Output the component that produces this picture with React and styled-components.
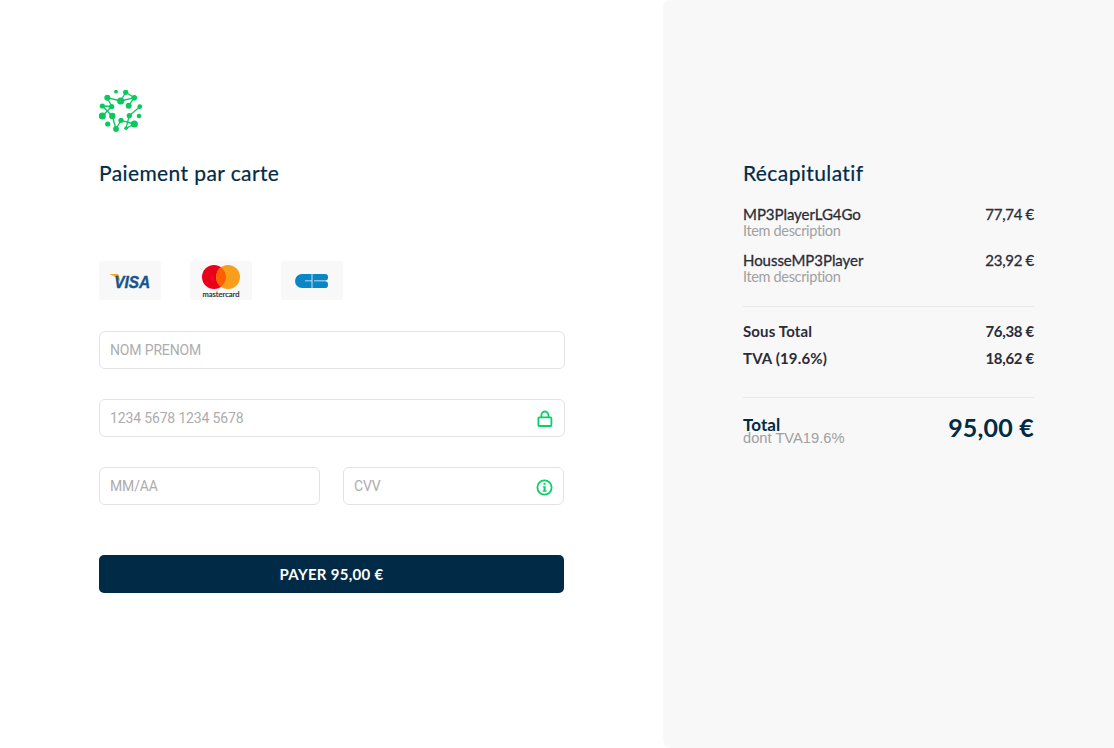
import React from 'react';
import styled, { createGlobalStyle } from 'styled-components';

const Global = createGlobalStyle`
  html, body { margin: 0; padding: 0; background: #fff; }
  body { font-family: "Lato", "Noto Sans", sans-serif; }
  input::placeholder { color: #adadad; opacity: 1; }
`;

const Page = styled.div`
  display: grid;
  grid-template-columns: 663px 451px;
  width: 1114px;
  height: 748px;
  overflow: hidden;
`;
const Checkout = styled.main`
  padding: 90px 0 0 99px;
  display: flex;
  flex-direction: column;
`;
const Heading = styled.h1`
  margin: 0;
  font-size: 21px;
  line-height: 26px;
  font-weight: 400;
  color: #012a46;
  letter-spacing: 0.4px;
  -webkit-text-stroke: 0.2px #012a46;
`;
const PayTitle = styled(Heading)`
  margin-top: 27px;
`;
const Cards = styled.div`
  display: flex;
  gap: 29px;
  margin-top: 75px;
`;
const CardBadge = styled.div`
  width: 62px;
  height: 39px;
  border-radius: 3px;
  background: #f8f8f8;
  display: flex;
  align-items: center;
  justify-content: center;
`;
const Form = styled.form`
  display: flex;
  flex-direction: column;
  gap: 30px;
  margin-top: 31px;
  width: 466px;
`;
const FieldRow = styled.div`
  display: flex;
  justify-content: space-between;
  width: 465px;
`;
const Field = styled.label`
  position: relative;
  display: block;
  width: ${p => p.$width || 466}px;
  height: 38px;
`;
const Input = styled.input`
  box-sizing: border-box;
  width: 100%;
  height: 100%;
  padding: 0 10px;
  border: 1px solid #e3e3e3;
  border-radius: 6px;
  background: #fff;
  font-family: "Roboto", sans-serif;
  font-size: 14px;
  letter-spacing: -0.15px;
  outline: none;
`;
const FieldIcon = styled.span`
  position: absolute;
  right: ${p => p.$right}px;
  top: ${p => p.$top}px;
  display: flex;
`;
const PayButton = styled.button`
  margin-top: 20px;
  width: 465px;
  height: 38px;
  padding: 0 0 1px;
  border: 0;
  border-radius: 5px;
  background: #012a46;
  color: #fff;
  font-family: "Lato", sans-serif;
  font-size: 15px;
  font-weight: 700;
  letter-spacing: 0.3px;
`;
const Summary = styled.aside`
  background: #f8f8f8;
  border-radius: 8px 0 0 8px;
  padding: 160px 80px 0;
`;
const Items = styled.div`
  display: flex;
  flex-direction: column;
  gap: 12px;
  margin-top: 19px;
`;
const Line = styled.div`
  display: flex;
  justify-content: space-between;
  color: #2c2c36;
  font-size: 15px;
  line-height: 18px;
  font-weight: ${p => p.$bold ? 700 : 400};
  letter-spacing: ${p => p.$bold ? '0.15px' : '-0.05px'};
  -webkit-text-stroke: ${p => p.$bold ? '0' : '0.3px #2c2c36'};
`;
const Amount = styled.span`
  letter-spacing: -0.3px;
`;
const Description = styled.div`
  color: #a0a0a0;
  font-size: 14.5px;
  line-height: 16px;
  letter-spacing: -0.35px;
`;
const Rule = styled.hr`
  border: 0;
  border-top: 1px solid #e8e8e8;
  margin: ${p => p.$margin};
`;
const Totals = styled.div`
  display: flex;
  flex-direction: column;
  gap: 9px;
`;
const GrandTotal = styled.div`
  display: flex;
  justify-content: space-between;
  align-items: flex-start;
`;
const TotalText = styled.div`
  padding-top: 6px;
`;
const TotalLabel = styled.div`
  color: #012a46;
  font-size: 17px;
  line-height: 13px;
  font-weight: 700;
  letter-spacing: 0.1px;
`;
const TotalNote = styled.div`
  color: #a0a0a0;
  font-size: 14.7px;
  line-height: 15px;
  font-family: "Liberation Sans", sans-serif;
`;
const TotalAmount = styled.div`
  color: #012a46;
  font-size: 25px;
  line-height: 30px;
  font-weight: 700;
  letter-spacing: 0.2px;
`;

const nodes = [
  [17,1.7,1.9],[26.7,2.3,2.6],[8.3,7.7,3],[21.7,11,3.6],[35.3,7.7,2.8],[3.3,16,2.6],[12.7,16.5,2.6],[29.7,15.7,3],[40.8,16.7,2.4],
  [3.3,26,3.6],[13.3,26,3.2],[30.3,25.7,2.6],[40,26,2.3],[8.7,34,2.6],[22,30.3,2.6],[35.3,34,3.6],[17,39,2.9],[27,38.3,1.8],
];
const links = [[2,3],[1,3],[3,4],[1,4],[2,6],[5,6],[6,9],[5,10],[7,4],[8,11],[10,16],[14,16],[14,15],[11,17],[17,15]];

const Logo = () => (
  <svg width="45" height="43" viewBox="0 0 45 43" style={{ display: 'block' }}>
    <g stroke="#08c85f" strokeWidth="1.3">
      {links.map(([a, b], i) => (
        <line key={i} x1={nodes[a][0]} y1={nodes[a][1]} x2={nodes[b][0]} y2={nodes[b][1]} />
      ))}
    </g>
    <g fill="#08c85f">
      {nodes.map(([x, y, r], i) => <circle key={i} cx={x} cy={y} r={r} />)}
    </g>
  </svg>
);

const VisaMark = () => (
  <svg width="42" height="16" viewBox="-1 0 42 16" style={{ overflow: 'visible' }}>
    <path d="M0 1h7c1 0 1.600.5 1.900 1.500L10.500 9C8.500 5.500 4.500 2.800 0 1.400z" fill="#f7a823" />
    <text x="4.200" y="14.500" fontFamily="Liberation Sans, sans-serif" fontSize="17" fontWeight="700" fontStyle="italic" fill="#14568f" stroke="#14568f" strokeWidth="0.4" textLength="36" lengthAdjust="spacingAndGlyphs">VISA</text>
  </svg>
);

const MastercardMark = () => (
  <svg width="40" height="35" viewBox="0 -2 40 35" style={{ overflow: 'visible' }}>
    <circle cx="13" cy="12" r="12" fill="#eb001b" />
    <circle cx="27" cy="12" r="12" fill="#f79e1b" />
    <path d="M20 2.300a12 12 0 0 1 0 19.400a12 12 0 0 1 0-19.400z" fill="#ff5f00" />
    <text x="20" y="31.500" textAnchor="middle" fontFamily="Lato, sans-serif" fontSize="7" fill="#231f20" stroke="#231f20" strokeWidth="0.15" textLength="37" lengthAdjust="spacingAndGlyphs">mastercard</text>
  </svg>
);

const CbMark = () => (
  <svg width="34" height="14" viewBox="0 0 34 14">
    <path d="M7 0H16.600V6.500H10V7.300H16.600V14H7A7 7 0 0 1 7 0z" fill="#0a86c6" />
    <path d="M17.400 0H30A3 3.200 0 0 1 30 6.500H19V7.300H30A3 3.300 0 0 1 30 14H17.400z" fill="#0a86c6" />
  </svg>
);

const LockMark = () => (
  <svg width="16" height="17" viewBox="0 0 16 17" fill="none" stroke="#0bce6c" strokeWidth="1.800">
    <rect x="1.400" y="7.400" width="13" height="8.600" rx="0.800" />
    <path d="M4.400 7.400V5a3.500 3.500 0 0 1 7 0v2.400" />
  </svg>
);

const InfoMark = () => (
  <svg width="17" height="17" viewBox="0 0 17 17">
    <circle cx="8.500" cy="8.500" r="7.100" fill="none" stroke="#0bce6c" strokeWidth="1.800" />
    <path d="M7.500 3.800h2v2h-2zM6.800 7.200h2.800v4.200h1v1.400H6.600v-1.400h1V8.600h-.8z" fill="#0bce6c" />
  </svg>
);

export default function App() {
  return (
    <Page>
      <Global />
      <Checkout>
        <Logo />
        <PayTitle>Paiement par carte</PayTitle>
        <Cards>
          <CardBadge><VisaMark /></CardBadge>
          <CardBadge><MastercardMark /></CardBadge>
          <CardBadge><CbMark /></CardBadge>
        </Cards>
        <Form onSubmit={e => e.preventDefault()}>
          <Field><Input placeholder="NOM PRENOM" /></Field>
          <Field>
            <Input placeholder="1234 5678 1234 5678" />
            <FieldIcon $right={12} $top={11}><LockMark /></FieldIcon>
          </Field>
          <FieldRow>
            <Field $width={221}><Input placeholder="MM/AA" /></Field>
            <Field $width={221}>
              <Input placeholder="CVV" />
              <FieldIcon $right={11} $top={12}><InfoMark /></FieldIcon>
            </Field>
          </FieldRow>
          <PayButton>PAYER 95,00 €</PayButton>
        </Form>
      </Checkout>
      <Summary>
        <Heading>Récapitulatif</Heading>
        <Items>
          <div>
            <Line><span>MP3PlayerLG4Go</span><Amount>77,74 €</Amount></Line>
            <Description>Item description</Description>
          </div>
          <div>
            <Line><span>HousseMP3Player</span><Amount>23,92 €</Amount></Line>
            <Description>Item description</Description>
          </div>
        </Items>
        <Rule $margin="21px 0 15px" />
        <Totals>
          <Line $bold><span>Sous Total</span><Amount>76,38 €</Amount></Line>
          <Line $bold><span>TVA (19.6%)</span><Amount>18,62 €</Amount></Line>
        </Totals>
        <Rule $margin="30px 0 14px" />
        <GrandTotal>
          <TotalText>
            <TotalLabel>Total</TotalLabel>
            <TotalNote>dont TVA19.6%</TotalNote>
          </TotalText>
          <TotalAmount>95,00 €</TotalAmount>
        </GrandTotal>
      </Summary>
    </Page>
  );
}
